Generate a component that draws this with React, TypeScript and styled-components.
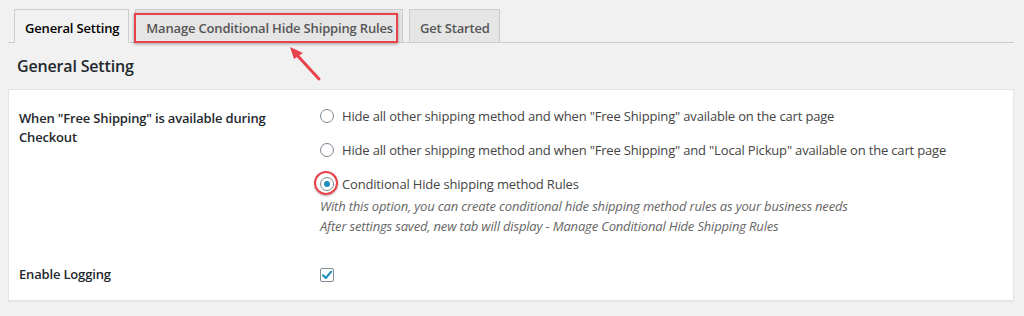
import styled, { createGlobalStyle } from 'styled-components';

const GlobalStyle = createGlobalStyle`
  html, body {
    margin: 0;
    background: #f1f1f1;
  }
  body {
    font-family: "Open Sans", "Noto Sans", sans-serif;
    letter-spacing: -0.17px;
    color: #444;
  }
`;

const Page = styled.div`
  width: 1024px;
  height: 316px;
  padding: 9px 10px 0 8px;
  box-sizing: border-box;
  background: #f1f1f1;
  overflow: hidden;
`;

const TabBar = styled.nav`
  display: flex;
  align-items: flex-end;
  gap: 6px;
  padding-left: 6px;
  border-bottom: 1px solid #ccc;
  height: 33px;
  position: relative;
`;

const Tab = styled.a<{ $active?: boolean }>`
  display: flex;
  align-items: center;
  padding: 3px 9px 0 10px;
  box-sizing: border-box;
  border: 1px solid #ccc;
  border-bottom: ${p => (p.$active ? '1px solid #f1f1f1' : 'none')};
  margin-bottom: ${p => (p.$active ? '-1px' : '0')};
  height: ${p => (p.$active ? '34px' : '33px')};
  background: ${p => (p.$active ? '#f1f1f1' : '#e5e5e5')};
  color: ${p => (p.$active ? '#000' : '#555')};
  font-size: 13px;
  font-weight: 600;
  text-decoration: none;
  white-space: nowrap;
  position: relative;
`;

const Highlight = styled.span`
  position: absolute;
  left: -2px;
  top: 3px;
  right: 4px;
  bottom: -1px;
  border: 2px solid #e8434b;
  box-shadow: 0 1px 3px rgba(0, 0, 0, 0.35);
  pointer-events: none;
`;

const Arrow = styled.svg`
  position: absolute;
  left: 275px;
  top: 35px;
  pointer-events: none;
`;

const Heading = styled.h2`
  margin: 0;
  padding: 12px 0 0 9px;
  height: 46px;
  box-sizing: border-box;
  font-size: 16px;
  font-weight: 600;
  color: #23282d;
`;

const Panel = styled.section`
  background: #fff;
  border: 1px solid #e5e5e5;
  box-shadow: 0 1px 1px rgba(0, 0, 0, 0.04);
  height: 212px;
  box-sizing: border-box;
  padding: 16px 10px 0 10px;
`;

const Row = styled.div<{ $gap?: number }>`
  display: grid;
  grid-template-columns: 301px 1fr;
  padding-bottom: ${p => p.$gap ?? 0}px;
`;

const Label = styled.div`
  font-size: 13px;
  font-weight: 600;
  color: #23282d;
  line-height: 19px;
  padding-top: 3px;
  width: 260px;
`;

const Options = styled.div`
  display: flex;
  flex-direction: column;
  gap: 14px;
`;

const Option = styled.label`
  display: flex;
  align-items: center;
  gap: 8px;
  font-size: 13px;
  color: #444;
  line-height: 20px;
`;

const Radio = styled.span<{ $checked?: boolean }>`
  width: 14px;
  height: 14px;
  flex: none;
  border-radius: 50%;
  border: 1px solid #7e8993;
  box-sizing: border-box;
  background: #fff;
  position: relative;
  ${p =>
    p.$checked &&
    `&::after {
      content: '';
      position: absolute;
      left: 3px;
      top: 3px;
      width: 6px;
      height: 6px;
      border-radius: 50%;
      background: #1e8cbe;
    }`}
`;

const RadioRing = styled.span`
  position: absolute;
  left: -7px;
  top: -7px;
  width: 24px;
  height: 24px;
  border-radius: 50%;
  border: 2px solid #e8434b;
  box-sizing: border-box;
  box-shadow: 0 1px 2px rgba(0, 0, 0, 0.3);
`;

const Description = styled.p`
  margin: -12px 0 0 0;
  font-size: 13px;
  font-style: italic;
  color: #666;
  line-height: 20px;
`;

const Checkbox = styled.span`
  width: 14px;
  height: 14px;
  border: 1px solid #7e8993;
  border-radius: 2px;
  box-sizing: border-box;
  display: flex;
  align-items: center;
  justify-content: center;
  background: #fff;
  margin-top: 6px;
`;

export default function App() {
  return (
    <>
      <GlobalStyle />
      <Page>
        <TabBar>
          <Tab $active>General Setting</Tab>
          <Tab>
            Manage Conditional Hide Shipping Rules
            <Highlight />
          </Tab>
          <Tab>Get Started</Tab>
          <Arrow width="44" height="40" viewBox="0 0 44 40">
            <line x1="36" y1="35" x2="13" y2="10" stroke="#e8434b" strokeWidth="3" strokeLinecap="round" />
            <polygon points="7,3 20,9 11,15" fill="#e8434b" />
          </Arrow>
        </TabBar>
        <Heading>General Setting</Heading>
        <Panel>
          <Row $gap={26}>
            <Label>When "Free Shipping" is available during Checkout</Label>
            <Options>
              <Option>
                <Radio />
                Hide all other shipping method and when "Free Shipping" available on the cart page
              </Option>
              <Option>
                <Radio />
                Hide all other shipping method and when "Free Shipping" and "Local Pickup" available on the cart page
              </Option>
              <Option>
                <Radio $checked>
                  <RadioRing />
                </Radio>
                Conditional Hide shipping method Rules
              </Option>
              <Description>
                With this option, you can create conditional hide shipping method rules as your business needs
                <br />
                After settings saved, new tab will display - Manage Conditional Hide Shipping Rules
              </Description>
            </Options>
          </Row>
          <Row>
            <Label>Enable Logging</Label>
            <Checkbox>
              <svg width="12" height="12" viewBox="0 0 12 12">
                <path d="M2 6.2 L4.8 9 L10.2 2.6" stroke="#1e8cbe" strokeWidth="2" fill="none" strokeLinecap="round" strokeLinejoin="round" />
              </svg>
            </Checkbox>
          </Row>
        </Panel>
      </Page>
    </>
  );
}
